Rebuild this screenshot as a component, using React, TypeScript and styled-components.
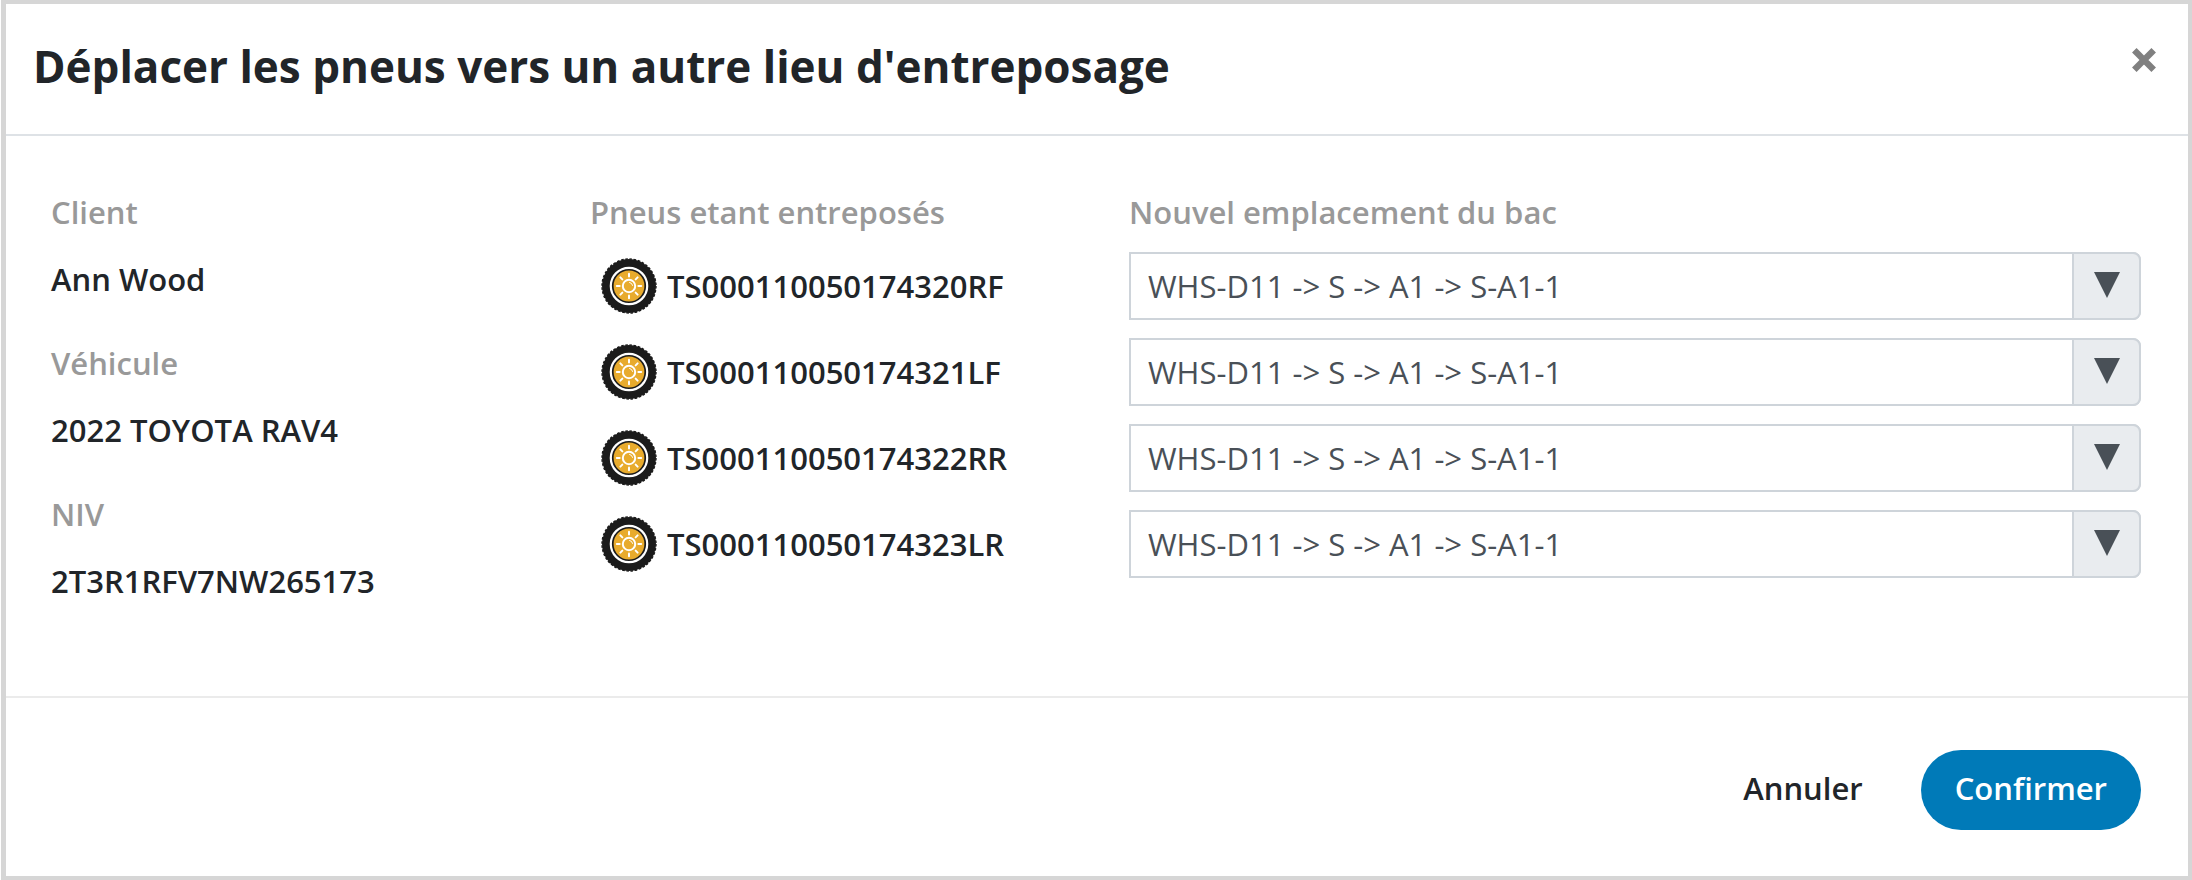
import React from "react";
import styled, { createGlobalStyle } from "styled-components";

const GlobalStyle = createGlobalStyle`
  *, *::before, *::after { box-sizing: border-box; }
  body {
    margin: 0;
    background: #fff;
    color: #212529;
    font-family: "Open Sans", "Noto Sans", sans-serif;
    font-size: 31px;
    line-height: 48px;
  }
`;

const Dialog = styled.section`
  display: flex;
  flex-direction: column;
  min-height: 100vh;
  margin-left: 1px;
  background: #fff;
  border: 4px solid #d6d6d6;
  border-left-width: 5px;
`;

const Header = styled.header`
  display: flex;
  align-items: flex-start;
  justify-content: space-between;
  padding: 29px 28px 35px 27px;
  border-bottom: 2px solid #dee2e6;
`;

const Title = styled.h1`
  margin: 0;
  font-size: 44px;
  font-weight: 700;
  line-height: 66px;
`;

const CloseButton = styled.button`
  display: flex;
  margin: 11px 0 0;
  padding: 4px;
  border: 0;
  background: none;
  color: #808080;
  cursor: pointer;
`;

const Body = styled.div`
  flex: 1;
  display: grid;
  grid-template-columns: 1fr 1fr 2fr;
  column-gap: 33px;
  padding: 52px 47px 16px 45px;
`;

const Details = styled.dl`
  margin: 0;
`;

const Label = styled.dt`
  margin-bottom: 19px;
  color: #999;
  font-weight: 600;
`;

const Value = styled.dd`
  margin: 0 0 36px;
  font-weight: 600;
`;

const ColumnTitle = styled.h2`
  margin: 0 0 16px;
  color: #999;
  font-size: inherit;
  font-weight: 600;
`;

const Stack = styled.ul`
  display: flex;
  flex-direction: column;
  gap: 18px;
  margin: 0;
  padding: 0;
  list-style: none;
`;

const Tire = styled.li`
  display: flex;
  align-items: center;
  gap: 10px;
  height: 68px;
  padding-left: 11px;
  font-weight: 600;
`;

const Picker = styled.li`
  display: grid;
  grid-template-columns: 1fr 69px;
  height: 68px;
`;

const Select = styled.select`
  grid-area: 1 / 1 / 2 / 3;
  width: 100%;
  padding: 0 88px 0 17px;
  appearance: none;
  border: 2px solid #ced4da;
  border-radius: 0 8px 8px 0;
  background: #fff;
  color: #495057;
  font: inherit;
`;

const Arrow = styled.span`
  grid-area: 1 / 2;
  z-index: 1;
  display: flex;
  align-items: center;
  justify-content: center;
  padding-bottom: 2px;
  border: 2px solid #ced4da;
  border-radius: 0 8px 8px 0;
  background: #e9ecef;
  color: #495057;
  pointer-events: none;
`;

const Footer = styled.footer`
  display: flex;
  align-items: center;
  justify-content: flex-end;
  gap: 24px;
  padding: 52px 47px 46px;
  border-top: 2px solid #ebebeb;
`;

const Button = styled.button<{ $primary?: boolean }>`
  height: 80px;
  padding: 0 34px 4px;
  border: 0;
  border-radius: 40px;
  background: ${(p) => (p.$primary ? "#007ab8" : "transparent")};
  color: ${(p) => (p.$primary ? "#fff" : "#212529")};
  font: inherit;
  font-weight: 600;
  cursor: pointer;
`;

const RAYS = [0, 45, 90, 135, 180, 225, 270, 315];

const TireIcon = () => (
  <svg width="56" height="56" viewBox="-28 -28 56 56" aria-hidden="true">
    <circle r="27" fill="#1b1b1b" />
    <circle r="27" fill="none" stroke="#1b1b1b" strokeWidth="1.4" strokeDasharray="2.6 1.64" />
    <circle r="18.2" fill="#1b1b1b" stroke="#fff" strokeWidth="2.2" />
    <circle r="15.4" fill="#e8ab2d" />
    <g fill="none" stroke="#fff" strokeWidth="2" strokeLinecap="round">
      <circle r="6.2" />
      {RAYS.map((angle) => (
        <path key={angle} d="M0 -9.4V-12.2" transform={`rotate(${angle})`} />
      ))}
      <path d="M0.6 -3.6A4 4 0 0 1 3.6 -0.6" strokeWidth="1" />
    </g>
  </svg>
);

const tires = [
  "TS000110050174320RF",
  "TS000110050174321LF",
  "TS000110050174322RR",
  "TS000110050174323LR",
];

const details = [
  ["Client", "Ann Wood"],
  ["Véhicule", "2022 TOYOTA RAV4"],
  ["NIV", "2T3R1RFV7NW265173"],
];

export default function App() {
  return (
    <>
      <GlobalStyle />
      <Dialog role="dialog" aria-labelledby="dialog-title">
        <Header>
          <Title id="dialog-title">Déplacer les pneus vers un autre lieu d'entreposage</Title>
          <CloseButton type="button" aria-label="Fermer">
            <svg width="24" height="24" viewBox="0 0 24 24" aria-hidden="true">
              <path d="M2.3 2.3L21.7 21.7M21.7 2.3L2.3 21.7" stroke="currentColor" strokeWidth="6.4" />
            </svg>
          </CloseButton>
        </Header>
        <Body>
          <Details>
            {details.map(([label, value]) => (
              <React.Fragment key={label}>
                <Label>{label}</Label>
                <Value>{value}</Value>
              </React.Fragment>
            ))}
          </Details>
          <div>
            <ColumnTitle>Pneus etant entreposés</ColumnTitle>
            <Stack>
              {tires.map((tire) => (
                <Tire key={tire}>
                  <TireIcon />
                  <label htmlFor={tire}>{tire}</label>
                </Tire>
              ))}
            </Stack>
          </div>
          <div>
            <ColumnTitle>Nouvel emplacement du bac</ColumnTitle>
            <Stack>
              {tires.map((tire) => (
                <Picker key={tire}>
                  <Select id={tire}>
                    <option>{"WHS-D11 -> S -> A1 -> S-A1-1"}</option>
                  </Select>
                  <Arrow aria-hidden="true">
                    <svg width="26" height="26" viewBox="0 0 26 26">
                      <path d="M0 0H26L13 26Z" fill="currentColor" />
                    </svg>
                  </Arrow>
                </Picker>
              ))}
            </Stack>
          </div>
        </Body>
        <Footer>
          <Button type="button">Annuler</Button>
          <Button type="button" $primary>
            Confirmer
          </Button>
        </Footer>
      </Dialog>
    </>
  );
}
